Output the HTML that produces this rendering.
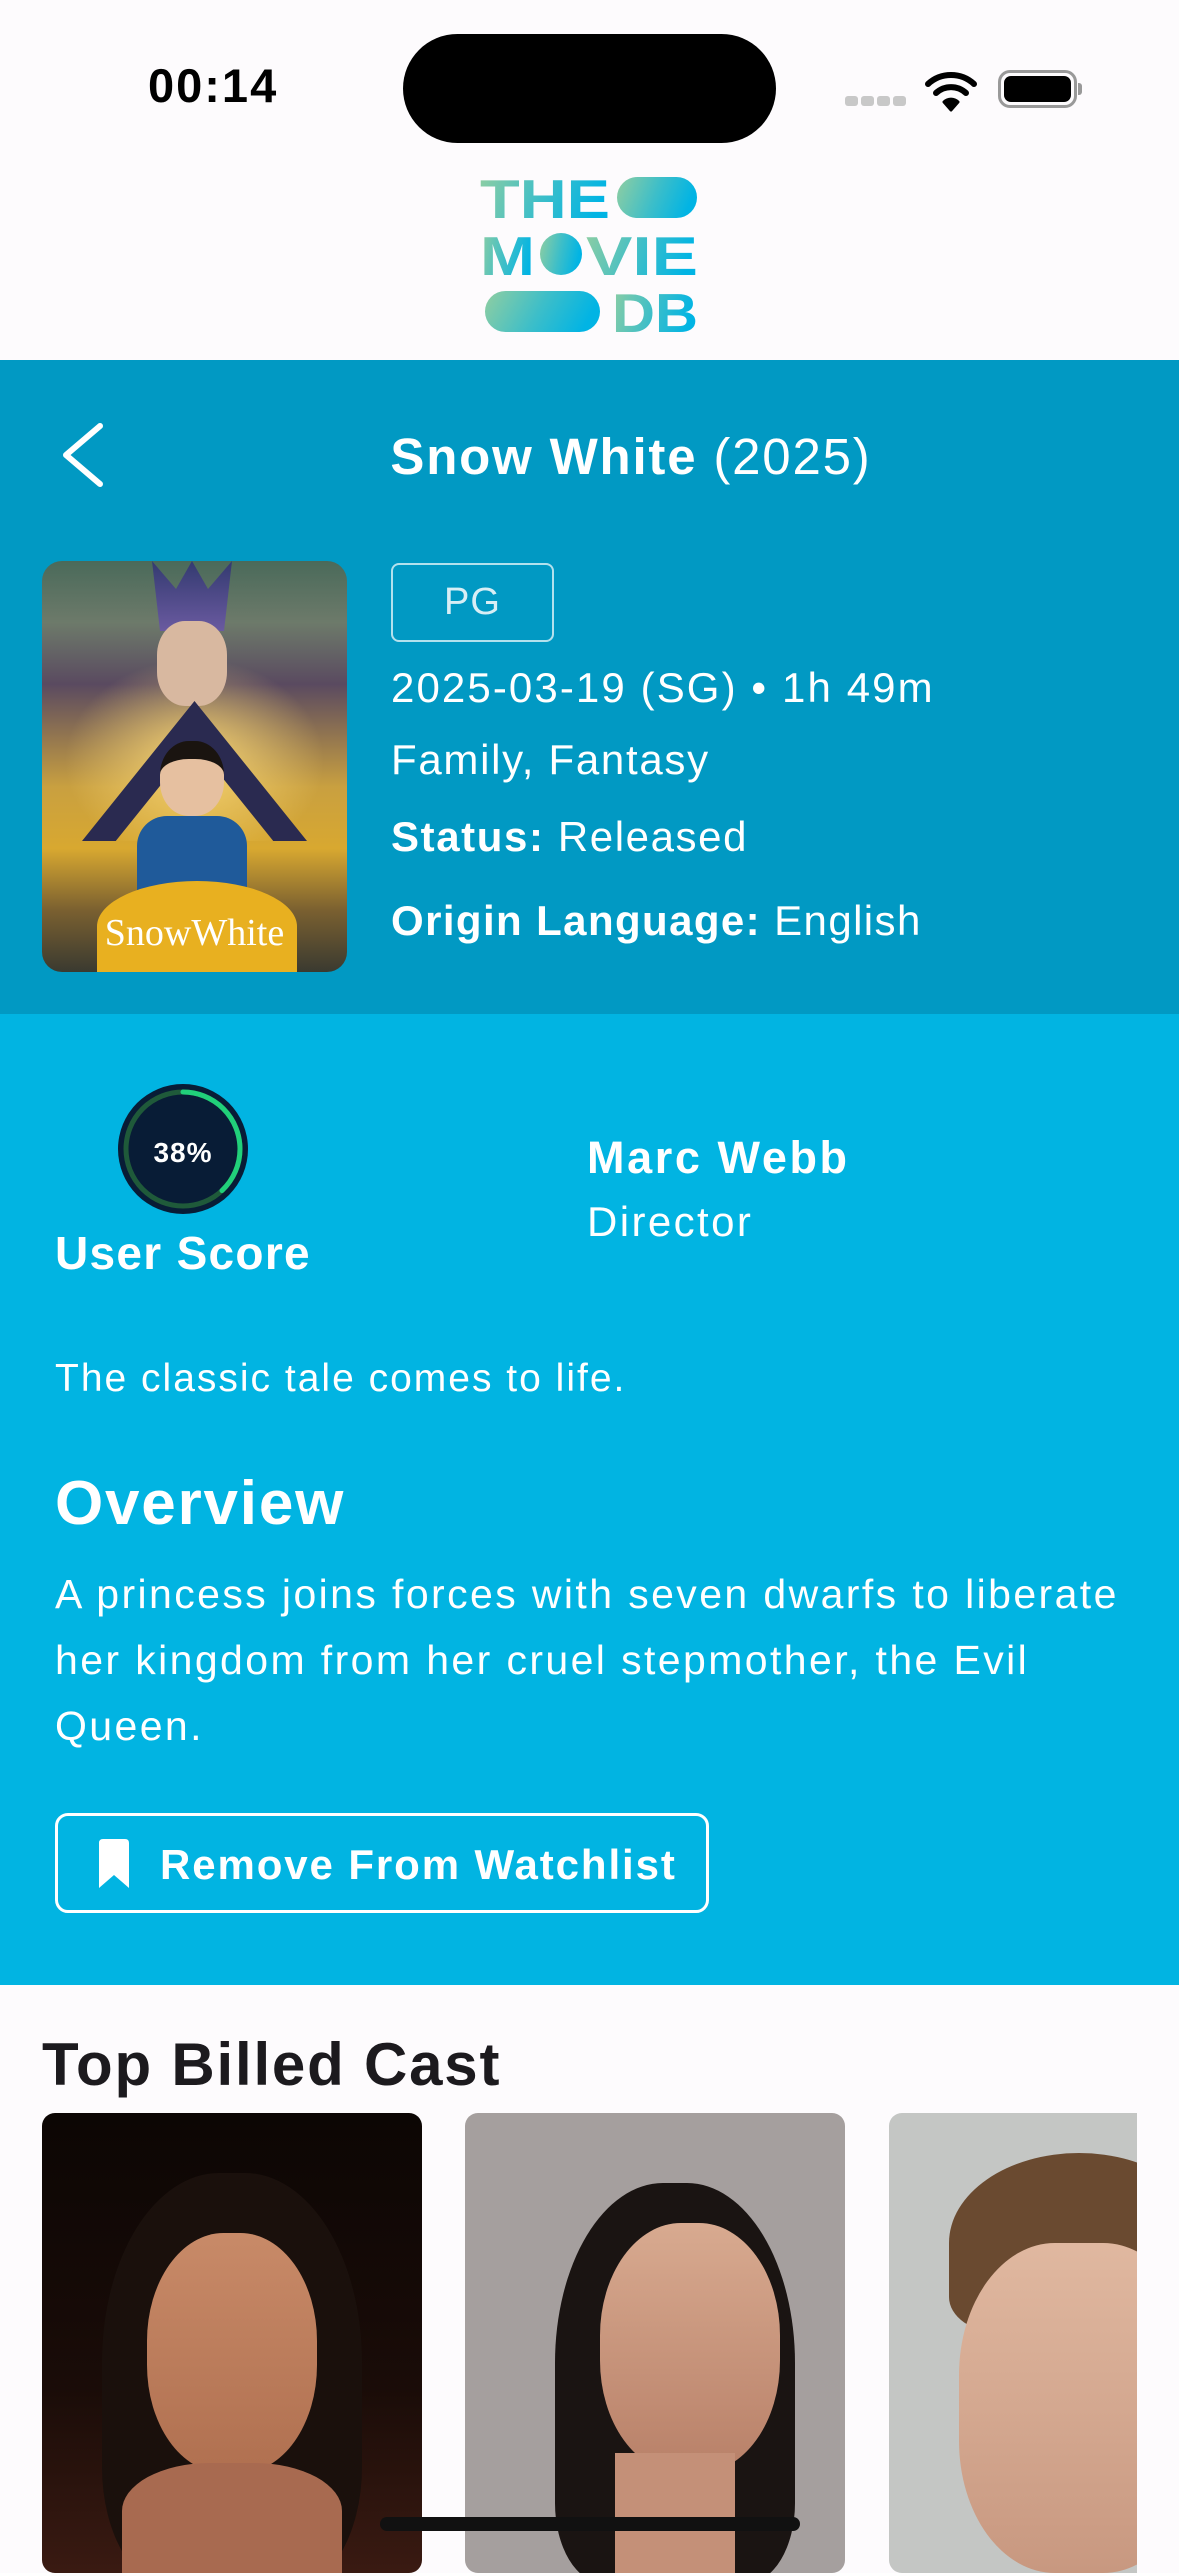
<!DOCTYPE html>
<html><head><meta charset="utf-8">
<style>
*{margin:0;padding:0;box-sizing:border-box}
body{width:1179px;height:2556px;overflow:hidden;background:#fdfbfd;font-family:"Liberation Sans",sans-serif;position:relative}
.abs{position:absolute}
.w{color:#fff}
</style></head><body>
<!-- status bar -->
<div class="abs" style="left:148px;top:58px;font-size:47px;font-weight:bold;color:#000;letter-spacing:2px">00:14</div>
<div class="abs" style="left:403px;top:34px;width:373px;height:109px;border-radius:55px;background:#000"></div>
<div class="abs" style="left:845px;top:96px;width:13px;height:10px;border-radius:3px;background:#c8c8c8;box-shadow:16px 0 #c8c8c8,32px 0 #c8c8c8,48px 0 #c8c8c8"></div>
<svg class="abs" style="left:925px;top:70px" width="52" height="42" viewBox="0 0 52 42">
<path d="M3 14 A34 34 0 0 1 49 14" stroke="#000" stroke-width="6" fill="none" stroke-linecap="round"/>
<path d="M11 23 A22 22 0 0 1 41 23" stroke="#000" stroke-width="6" fill="none" stroke-linecap="round"/>
<path d="M19 32 A10 10 0 0 1 33 32 L26 40 Z" fill="#000" stroke="#000" stroke-width="3" stroke-linejoin="round"/>
</svg>
<div class="abs" style="left:998px;top:70px;width:79px;height:38px;border:3px solid #999;border-radius:12px;padding:3px"><div style="width:100%;height:100%;background:#000;border-radius:7px"></div></div>
<div class="abs" style="left:1078px;top:83px;width:4px;height:12px;background:#999;border-radius:0 3px 3px 0"></div>
<!-- logo -->
<svg class="abs" style="left:478px;top:174px" width="224" height="162" viewBox="0 0 224 162">
<defs><linearGradient id="g" x1="0" y1="0" x2="1" y2="0.2"><stop offset="0" stop-color="#90cea1"/><stop offset="0.55" stop-color="#3cbec9"/><stop offset="1" stop-color="#01b4e4"/></linearGradient></defs>
<g fill="url(#g)">
<text x="2" y="44" font-family="Liberation Sans" font-weight="bold" font-size="55" textLength="130" lengthAdjust="spacingAndGlyphs">THE</text>
<rect x="139" y="3" width="80" height="41" rx="20.5"/>
<text x="2" y="101" font-family="Liberation Sans" font-weight="bold" font-size="55" textLength="55" lengthAdjust="spacingAndGlyphs">M</text>
<circle cx="83" cy="80" r="21"/>
<text x="108" y="101" font-family="Liberation Sans" font-weight="bold" font-size="55" textLength="112" lengthAdjust="spacingAndGlyphs">VIE</text>
<rect x="7" y="117" width="115" height="41" rx="20.5"/>
<text x="134" y="158" font-family="Liberation Sans" font-weight="bold" font-size="55" textLength="86" lengthAdjust="spacingAndGlyphs">DB</text>
</g></svg>
<!-- dark band -->
<div class="abs" style="left:0;top:360px;width:1179px;height:654px;background:#0199c3"></div>
<svg class="abs" style="left:58px;top:420px" width="50" height="70" viewBox="0 0 50 70"><path d="M42 6 L8 35 L42 64" stroke="#fff" stroke-width="6" fill="none" stroke-linecap="round" stroke-linejoin="round"/></svg>
<div class="abs w" style="left:0;width:1179px;top:427px;text-align:center;font-size:51px;padding-left:83px;letter-spacing:1.8px"><b>Snow White</b> (2025)</div>
<!-- poster -->
<div class="abs" style="left:42px;top:561px;width:305px;height:411px;border-radius:20px;overflow:hidden;background:linear-gradient(180deg,#4a6a5a 0%,#6d7a6a 15%,#5a4a60 30%,#c9a040 55%,#d8a830 70%,#7a6030 85%,#3a3a30 100%)">
<div class="abs" style="left:0;top:80px;width:305px;height:200px;background:radial-gradient(ellipse at 50% 60%,rgba(255,220,120,.9),rgba(255,200,80,0) 60%)"></div>
<div class="abs" style="left:110px;top:0;width:80px;height:70px;background:linear-gradient(#333a70,#6a5aa0);clip-path:polygon(10% 100%,0 0,30% 40%,50% 0,70% 40%,100% 0,90% 100%)"></div>
<div class="abs" style="left:115px;top:60px;width:70px;height:85px;border-radius:40%;background:#d8b8a0"></div>
<div class="abs" style="left:40px;top:140px;width:225px;height:140px;background:#2a2a50;clip-path:polygon(50% 0,100% 100%,85% 100%,50% 30%,15% 100%,0 100%)"></div>
<div class="abs" style="left:118px;top:180px;width:64px;height:75px;border-radius:45%;background:#e6c0a0;border-top:18px solid #1a1410"></div>
<div class="abs" style="left:95px;top:255px;width:110px;height:80px;border-radius:30px 30px 0 0;background:#1f5a9a"></div>
<div class="abs" style="left:55px;top:320px;width:200px;height:91px;border-radius:50% 50% 0 0;background:#e8b020"></div>
<div class="abs" style="left:0;top:350px;width:305px;text-align:center;font-family:'Liberation Serif',serif;color:#fff;font-size:38px">SnowWhite</div>
</div>
<div class="abs w" style="left:391px;top:563px;width:163px;height:79px;border:2px solid rgba(255,255,255,.7);border-radius:8px;text-align:center;line-height:75px;font-size:38px;color:#d8eef5;letter-spacing:1px">PG</div>
<div class="abs w" style="left:391px;top:664px;font-size:42px;letter-spacing:2.1px">2025-03-19 (SG) • 1h 49m</div>
<div class="abs w" style="left:391px;top:736px;font-size:42px;letter-spacing:1.7px">Family, Fantasy</div>
<div class="abs w" style="left:391px;top:813px;font-size:42px;letter-spacing:1.6px"><b>Status:</b> Released</div>
<div class="abs w" style="left:391px;top:897px;font-size:42px;letter-spacing:1.4px"><b>Origin Language:</b> English</div>
<!-- light band -->
<div class="abs" style="left:0;top:1014px;width:1179px;height:971px;background:#01b4e2"></div>
<svg class="abs" style="left:116px;top:1082px" width="134" height="134" viewBox="0 0 134 134">
<circle cx="67" cy="67" r="65" fill="#081c36"/>
<circle cx="67" cy="67" r="57" fill="none" stroke="#1f5a3a" stroke-width="5"/>
<circle cx="67" cy="67" r="57" fill="none" stroke="#21d07a" stroke-width="5" stroke-dasharray="136 358" transform="rotate(-90 67 67)" stroke-linecap="round"/>
<text x="67" y="80" text-anchor="middle" fill="#fff" font-family="Liberation Sans" font-weight="bold" font-size="28" letter-spacing="1">38%</text>
</svg>
<div class="abs w" style="left:55px;top:1226px;font-size:46px;font-weight:bold;letter-spacing:1.3px">User Score</div>
<div class="abs w" style="left:587px;top:1132px;font-size:45px;font-weight:bold;letter-spacing:2.6px">Marc Webb</div>
<div class="abs w" style="left:587px;top:1198px;font-size:42px;letter-spacing:2.4px">Director</div>
<div class="abs w" style="left:55px;top:1357px;font-size:39px;letter-spacing:2px">The classic tale comes to life.</div>
<div class="abs w" style="left:55px;top:1468px;font-size:62px;font-weight:bold;letter-spacing:1.8px">Overview</div>
<div class="abs w" style="left:55px;top:1561px;font-size:41px;line-height:66px;white-space:nowrap;letter-spacing:2.4px">A princess joins forces with seven dwarfs to liberate<br>her kingdom from her cruel stepmother, the Evil<br>Queen.</div>
<div class="abs" style="left:55px;top:1813px;width:654px;height:100px;border:3px solid #fff;border-radius:13px"></div>
<svg class="abs" style="left:95px;top:1838px" width="38" height="52" viewBox="0 0 38 52"><path d="M4 5 Q4 1 8 1 L30 1 Q34 1 34 5 L34 50 L19 37 L4 50 Z" fill="#fff"/></svg>
<div class="abs w" style="left:160px;top:1841px;font-size:42px;font-weight:bold;letter-spacing:1.9px">Remove From Watchlist</div>
<!-- cast -->
<div class="abs" style="left:42px;top:2030px;font-size:60px;font-weight:bold;color:#1c1a1e;letter-spacing:1.8px">Top Billed Cast</div>
<div class="abs" style="left:42px;top:2113px;width:380px;height:460px;border-radius:13px;overflow:hidden;background:linear-gradient(#0c0604,#1a0c08 60%,#3a1a12)">
<div class="abs" style="left:60px;top:60px;width:260px;height:420px;border-radius:45% 45% 30% 30%;background:#1a100c"></div>
<div class="abs" style="left:105px;top:120px;width:170px;height:240px;border-radius:45%;background:linear-gradient(#c88a68,#b07050)"></div>
<div class="abs" style="left:80px;top:350px;width:220px;height:120px;border-radius:40% 40% 0 0;background:#a86a50"></div>
</div>
<div class="abs" style="left:465px;top:2113px;width:380px;height:460px;border-radius:13px;overflow:hidden;background:#a59f9e">
<div class="abs" style="left:90px;top:70px;width:240px;height:400px;border-radius:45% 45% 20% 20%;background:#1a1412"></div>
<div class="abs" style="left:135px;top:110px;width:180px;height:250px;border-radius:45%;background:linear-gradient(#d8aa90,#b88068)"></div>
<div class="abs" style="left:150px;top:340px;width:120px;height:140px;background:#c49078"></div>
</div>
<div class="abs" style="left:889px;top:2113px;width:248px;height:460px;border-radius:13px 0 0 13px;overflow:hidden;background:#c4c6c4">
<div class="abs" style="left:60px;top:40px;width:260px;height:180px;border-radius:50% 50% 20% 20%;background:#6a4a30"></div>
<div class="abs" style="left:70px;top:130px;width:240px;height:330px;border-radius:40%;background:linear-gradient(#e0b8a0,#c89880)"></div>
</div>
<div class="abs" style="left:380px;top:2517px;width:420px;height:14px;border-radius:7px;background:#111"></div>
</body></html>
